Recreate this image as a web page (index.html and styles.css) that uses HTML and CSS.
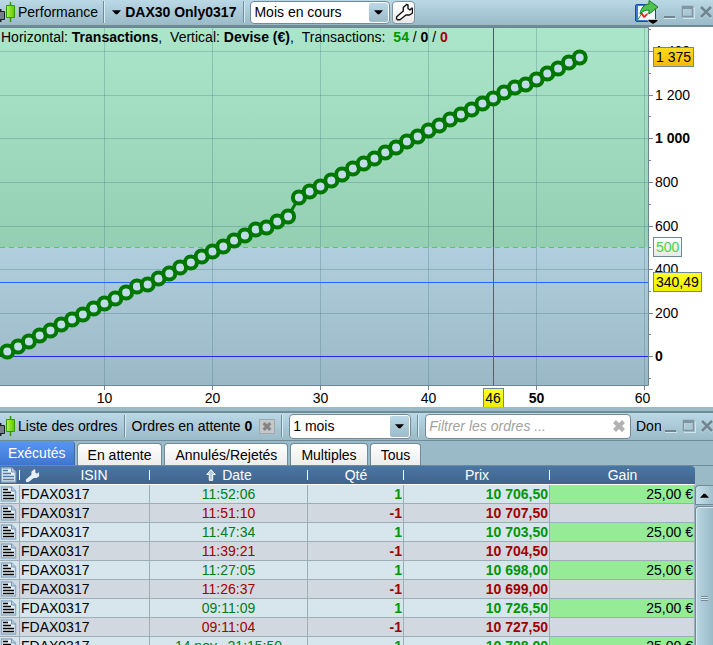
FILE: index.html
```html
<!DOCTYPE html>
<html lang="fr">
<head>
<meta charset="utf-8">
<title>Performance</title>
<link rel="stylesheet" href="styles.css">
</head>
<body>
<svg class="defs" aria-hidden="true">
  <defs>
    <linearGradient id="candle" x2="1"><stop stop-color="#b4f23c"/><stop offset="1" stop-color="#58c80a"/></linearGradient>
    <symbol id="candles" viewBox="0 0 16 21">
      <path d="M.5 7v13" stroke="#222" stroke-width="2"/><path d="M-3 9.500H4.500V17.500H-3z" fill="#71808c" stroke="#1d2328"/>
      <path d="M10.500 0v20" stroke="#2e9a06" stroke-width="1.500"/><path d="M6.500 3.500h8v12h-8z" fill="url(#candle)" stroke="#2e9a06"/>
    </symbol>
    <symbol id="min" viewBox="0 0 14 16"><path d="M1 13h11v2H1z" fill="#71848f"/><path d="M1 15h12v1H1z" fill="#d4e4ec"/></symbol>
    <symbol id="max" viewBox="0 0 14 16"><path d="M2.500 5.500h11v10h-11z" fill="none" stroke="#d4e4ec"/><path d="M1.500 3.500h10v10h-10z" fill="none" stroke="#84949e" stroke-width="1.500"/><path d="M1 3h11v3H1z" fill="#84949e"/></symbol>
    <symbol id="close" viewBox="0 0 14 16"><path d="M2 5l10 10M12 5L2 15" stroke="#d4e4ec" stroke-width="2"/><path d="M2 4l10 10M12 4L2 14" stroke="#71848f" stroke-width="2.600"/></symbol>
    <symbol id="caret" viewBox="0 0 10 5"><path d="M0 0h10L6 4.500H4z" fill="#000"/></symbol>
    <symbol id="wrench" viewBox="0 0 18 18"><path d="M1.700 13.700L8.300 8V4.500L11.600 1.500 13 2v3.500l2 1.500 2-2 .5 1v4L14.500 12H11L5 16.800H2.500l-1-1z" stroke-linejoin="round"/></symbol>
    <symbol id="cross" viewBox="0 0 12 12"><path d="M3 0l3 3 3-3 3 3-3 3 3 3-3 3-3-3-3 3-3-3 3-3-3-3z"/></symbol>
    <symbol id="doc" viewBox="0 0 17 16">
      <path d="M1.500 1h10l4 4v10h-14z" fill="#e5eff6" stroke="#8eacc5" stroke-width="1.500"/><path d="M11.500 1v4h4" fill="#b5cfe2" stroke="#7899b7"/>
      <path class="doc-lines" d="M3 3.500h5M3 6.500h8M3 9.500h11M3 12.500h11" fill="none" stroke-width="1.400"/>
    </symbol>
  </defs>
</svg>

<main class="app">
  <header class="bar bar-top">
    <svg class="candles"><use href="#candles"/></svg>
    <span class="name">Performance</span>
    <i class="sep"></i>
    <button class="instrument" type="button"><svg class="caret"><use href="#caret"/></svg>DAX30 Only0317</button>
    <i class="sep"></i>
    <div class="pick pick-wide">
      <select aria-label="Période"><option>Mois en cours</option></select>
      <span class="drop"><svg class="caret"><use href="#caret"/></svg></span>
    </div>
    <button class="tool" type="button" aria-label="Réglages"><svg class="wrench"><use href="#wrench"/></svg></button>
    <div class="window">
      <button class="export" type="button" aria-label="Exporter">
        <svg viewBox="0 0 24 24"><rect x=".5" y="4.500" width="20" height="17" rx="1.500" fill="#3b78cf" stroke="#164da4"/><path d="M3 6h17v14H3z" fill="#f5faff"/><path d="M2 21L7 13l3 4 5-6" fill="none" stroke="#1ca52a"/><path d="M6 13l3 4 3-3" fill="none" stroke="#ec2525" stroke-width="1.500"/><path d="M5 14C6 8 9 4.500 14 4V.5L23 7l-9 7v-4c-4 0-6 1-9 4z" fill="#4fc250" stroke="#178021"/><path d="M13 19.500h10v1.500l-4 3h-2l-4-3z" fill="#000" stroke="#fff" stroke-width=".6"/></svg>
      </button>
      <button type="button" aria-label="Réduire"><svg><use href="#min"/></svg></button>
      <button type="button" aria-label="Agrandir"><svg><use href="#max"/></svg></button>
      <button type="button" aria-label="Fermer"><svg><use href="#close"/></svg></button>
    </div>
  </header>

  <section class="chart">
    <p class="legend"><span>Horizontal: <b>Transactions</b>,</span><span>Vertical: <b>Devise (€)</b>,</span><span>Transactions:</span><span><b class="win">54</b> / <b>0</b> / <b class="loss">0</b></span></p>
    <svg class="plot" id="plot" viewBox="0 0 713 380" role="img" aria-label="Performance">
      <defs>
        <linearGradient id="green" x2="0" y2="1"><stop stop-color="#abe6ca"/><stop offset="1" stop-color="#94ceb3"/></linearGradient>
        <linearGradient id="blue" x2="0" y2="1"><stop stop-color="#b0cedd"/><stop offset="1" stop-color="#9ab8c5"/></linearGradient>
        <linearGradient id="gold" x2="0" y2="1"><stop stop-color="#ffdc20"/><stop offset="1" stop-color="#f5b905"/></linearGradient>
        <linearGradient id="yellow" x2="0" y2="1"><stop stop-color="#ffff28"/><stop offset="1" stop-color="#eeee00"/></linearGradient>
        <linearGradient id="grey" x2="0" y2="1"><stop stop-color="#fff"/><stop offset="1" stop-color="#e8e8e8"/></linearGradient>
      </defs>
      <rect width="648" height="220" fill="url(#green)"/>
      <rect y="220" width="648" height="138" fill="url(#blue)"/>
      <g id="grid" class="grid"></g>
      <path d="M0 220.500H648" stroke="#52cc52" stroke-dasharray="5 4"/>
      <path d="M0 329.500H648" stroke="#2828d8"/>
      <path d="M0 255.500H648" stroke="#2864ff"/>
      <path d="M493.500 0V220" stroke="#455e5d"/><path d="M493.500 220V358" stroke="#2f5fd8"/>
      <path d="M0 358.500H648.500V.5H0" fill="none" stroke="#6c8793"/>
      <g id="curve" class="curve"></g>
      <g id="ticks" class="ticks"></g>
      <rect x="653.500" y="20.500" width="40" height="19" fill="url(#gold)" stroke="#708894"/><text x="656" y="35">1 375</text>
      <rect x="653.500" y="210.500" width="28" height="19" fill="url(#grey)" stroke="#708894"/><text x="656" y="225" class="level">500</text>
      <rect x="653.500" y="245.500" width="48" height="19" fill="url(#yellow)" stroke="#708894"/><text x="656" y="260">340,49</text>
      <rect x="483.500" y="361.500" width="20" height="19" fill="url(#yellow)" stroke="#708894"/><text x="493" y="376" class="mid">46</text>
    </svg>
  </section>

  <section class="orders">
    <header class="bar">
      <svg class="candles"><use href="#candles"/></svg>
      <span class="name">Liste des ordres</span>
      <i class="sep"></i>
      <span class="pending">Ordres en attente <b>0</b></span>
      <button class="cancel" type="button" aria-label="Annuler les ordres"><svg><use href="#cross"/></svg></button>
      <i class="sep"></i>
      <div class="pick">
        <select aria-label="Durée"><option>1 mois</option></select>
        <span class="drop"><svg class="caret"><use href="#caret"/></svg></span>
      </div>
      <i class="sep"></i>
      <div class="filter">
        <input type="text" aria-label="Filtrer les ordres" placeholder="Filtrer les ordres ...">
        <button type="button" aria-label="Effacer"><svg><use href="#cross"/></svg></button>
      </div>
      <span class="clip">Données</span>
      <div class="window">
        <button type="button" aria-label="Réduire"><svg><use href="#min"/></svg></button>
        <button type="button" aria-label="Agrandir"><svg><use href="#max"/></svg></button>
        <button type="button" aria-label="Fermer"><svg><use href="#close"/></svg></button>
      </div>
    </header>
    <nav class="tabs">
      <button class="on" type="button">Exécutés</button><button type="button">En attente</button><button type="button">Annulés/Rejetés</button><button type="button">Multiples</button><button type="button">Tous</button>
    </nav>
    <div class="list">
      <table>
        <colgroup><col class="c-doc"><col class="c-isin"><col class="c-date"><col class="c-qty"><col class="c-price"><col></colgroup>
        <thead><tr>
          <th><svg class="doc doc-head"><use href="#doc"/></svg></th>
          <th><div class="isin"><svg class="wrench"><use href="#wrench"/></svg><span>ISIN</span></div></th>
          <th><svg class="up" viewBox="0 0 10 12"><path d="M5 .7L9.300 5.500H6.700V11.300H3.300V5.500H.7z" fill="#b8cce0" stroke="#fff"/></svg>Date</th>
          <th>Qté</th><th>Prix</th><th>Gain</th>
        </tr></thead>
        <tbody id="rows"></tbody>
      </table>
      <div class="scroll"><button type="button" aria-label="Monter"><svg viewBox="0 0 10 5"><path d="M0 5h10L6 .5H4z"/></svg></button><div class="thumb"><i></i></div></div>
    </div>
  </section>
</main>
<script src="app.js"></script>
</body>
</html>
```
FILE: styles.css
```css
* { box-sizing: border-box; }
body { margin: 0; background: #9bbac8; color: #000; font: 14px/18px "Liberation Sans", Arial, sans-serif; }
button, select, input { font: inherit; color: inherit; margin: 0; padding: 0; border: 0; background: none; }
b { font-weight: bold; }
svg { display: block; flex: none; }
.defs { position: absolute; width: 0; height: 0; }
.app { display: flex; flex-direction: column; height: 100vh; overflow: hidden; }

.bar { display: flex; align-items: center; height: 28px; flex: none; background: linear-gradient(#bad8e5, #9bbac8); border-top: 1px solid #d4e8f0; border-bottom: 1px solid #708b98; box-shadow: inset 0 -1px #9bbac8; white-space: nowrap; }
.bar-top { height: 27px; padding-bottom: 1px; border-top: 0; border-bottom-width: 2px; }
.candles { width: 16px; height: 21px; margin-right: 2px; }
.sep { width: 2px; height: 22px; flex: none; margin: 0 5px; background: linear-gradient(90deg, #718b98 50%, #d9edf5 50%); }
.orders .sep { margin: 0 6px; }
.instrument { display: flex; align-items: center; gap: 4px; padding: 0 2px; font-weight: bold; }
.caret { width: 9px; height: 5px; }
.pick { position: relative; width: 122px; height: 25px; flex: none; }
.pick-wide { width: 140px; height: 23px; }
.pick select { appearance: none; width: 100%; height: 100%; padding: 0 3px; background: #fff; border: 1px solid #738b98; border-radius: 4px; }
.drop { position: absolute; top: 2px; right: 2px; bottom: 2px; width: 19px; display: grid; place-items: center; background: linear-gradient(#bad8e5, #9cbbc9); border-radius: 2px; pointer-events: none; }
.tool { width: 23px; height: 23px; flex: none; margin-left: 2px; display: grid; place-items: center; background: linear-gradient(#fff, #e8e8e8); border: 1px solid #8095a0; border-radius: 4px; }
.wrench { width: 18px; height: 18px; fill: #fff; stroke: #111; stroke-width: 1.4; }
.window { display: flex; align-items: center; gap: 4px; margin-left: auto; }
.window svg { width: 14px; height: 16px; margin-bottom: 2px; }
.window .export svg { width: 24px; height: 24px; margin: 0; }

.chart { position: relative; flex: none; background: #fff; }
.legend { position: absolute; top: 1px; left: 1px; display: flex; gap: 8px; margin: 0; white-space: nowrap; }
.win { color: #009600; }
.loss { color: #a00000; }
.plot { width: 100%; height: auto; }
.plot text { font-size: 14px; }
.plot .mid { text-anchor: middle; }
.plot .level { fill: #46d246; }
.plot .strong { font-weight: bold; }
.grid { stroke: #34616b; stroke-opacity: .25; }
.ticks path { stroke: #708894; }
.curve polyline { fill: none; stroke: #007800; stroke-width: 3; }
.curve circle { fill: #c0dce9; stroke: #007800; stroke-width: 4; }

.orders { display: flex; flex-direction: column; flex: 1; min-height: 0; margin-top: 1px; padding-top: 3px; }
.orders > .bar { height: 30px; padding-bottom: 1px; border-top: 2px solid #708b98; }
.pending { margin-right: 7px; }
.cancel { width: 16px; height: 15px; padding: 2px; background: #c3c9cb; border: 1px solid #a2a8aa; }
.cancel svg { width: 10px; height: 9px; fill: #858585; }
.filter { position: relative; flex: 1; height: 25px; min-width: 60px; }
.filter input { width: 100%; height: 100%; padding: 0 24px 0 3px; background: #fff; border: 1px solid #738b98; border-radius: 4px; }
.filter input::placeholder { color: #a2a2a2; font-style: italic; opacity: 1; }
.filter button { position: absolute; top: 6px; right: 6px; }
.filter svg { width: 12px; height: 12px; fill: #b2b2b2; }
.clip { width: 25px; margin: 0 3px 0 5px; flex: none; overflow: hidden; }
.orders .bar .window { margin-left: 0; margin-right: -1px; }

.tabs { display: flex; gap: 2px; height: 25px; flex: none; align-items: flex-end; border-bottom: 1px solid #708b98; }
.tabs button { height: 22px; padding: 0 10px; background: linear-gradient(#fff, #ececec); border: 1px solid #708b98; border-bottom: 0; border-radius: 4px 4px 0 0; white-space: nowrap; }
.tabs .on { height: 24px; padding: 0 8px; color: #fff; background: linear-gradient(#5a96ee, #3d76d2); border: 0; border-right: 1px solid #3d6ca8; border-radius: 0 4px 0 0; }

.list { display: flex; flex: 1; min-height: 0; overflow: hidden; align-items: stretch; }
table { flex: 1; align-self: flex-start; table-layout: fixed; border-collapse: separate; border-spacing: 0; width: 0; }
.c-doc { width: 20px; }
.c-isin { width: 130px; }
.c-date { width: 158px; }
.c-qty { width: 96px; }
.c-price { width: 146px; }
th { height: 19px; padding: 0; font-weight: normal; line-height: 18px; color: #fff; background: linear-gradient(90deg, transparent calc(100% - 1px), #fff 0) 0 4px / 100% 10px no-repeat, linear-gradient(#4a76a5, #40648c); border-bottom: 1px solid #fff; }
th:last-child { background: linear-gradient(#4a76a5, #40648c); border-top-right-radius: 4px; }
.isin { display: flex; align-items: center; height: 18px; padding-left: 4px; }
.isin span { flex: 1; text-align: center; padding-right: 2px; }
.isin .wrench { width: 16px; height: 15px; fill: #e5edf5; stroke: #e5edf5; stroke-width: 0; }
.up { display: inline-block; width: 10px; height: 12px; margin-right: 6px; vertical-align: -1px; }
td { height: 19px; padding: 0 1px; line-height: 18px; border-right: 1px solid #9caeb6; border-bottom: 1px solid #9caeb6; white-space: nowrap; background: #d1d8df; }
.buy td { background: #d7e6ed; }
.buy td.gain { background: #96ec96; }
td:first-child { padding: 0; }
td.date { text-align: center; color: #a00000; }
td.num { text-align: right; font-weight: bold; color: #a00000; }
.buy td.date { color: #007d14; }
.buy td.num { color: #009600; }
td.gain { text-align: right; }
.doc { width: 17px; height: 16px; stroke: #000; }
.doc-head { stroke: #4e78a5; }
.scroll { width: 18px; flex: none; padding-top: 19px; display: flex; flex-direction: column; }
.scroll button { height: 20px; flex: none; display: grid; place-items: center; background: linear-gradient(90deg, #c3dfea, #a1c0cd); border: 1px solid #738b98; border-right: 0; border-radius: 4px 0 0 0; }
.scroll svg { width: 9px; height: 5px; }
.thumb { flex: 1; display: grid; place-items: center; margin-top: 1px; background: linear-gradient(90deg, #b9d6e1, #9bbac8); border: 1px solid #738b98; border-width: 1px 0 0 1px; box-shadow: inset 1px 1px #d8eaf1; border-radius: 4px 0 0 0; }
.thumb i { width: 7px; height: 5px; margin-top: 44px; background: repeating-linear-gradient(#738b98 0 1px, #d8eaf1 1px 2px); }
```
FILE: app.js
```js
const xOf = n => 10.8 * n - 3.5;

// Height of the equity curve after each transaction.
const curve = [324, 319, 314, 308, 303, 297, 292, 287, 281, 276, 271, 265, 259, 257, 251, 246, 240, 235, 229, 224, 219, 213, 208, 202, 200, 194, 189, 170, 164, 159, 153, 147, 141, 136, 131, 125, 120, 114, 109, 103, 98, 92, 87, 82, 76, 71, 65, 60, 57, 52, 46, 41, 35, 30];
document.getElementById("curve").innerHTML =
  `<polyline points="-4,330 ${curve.map((y, i) => `${xOf(i + 1)},${y + 0.5}`).join(" ")}"/>` +
  curve.map((y, i) => `<circle cx="${xOf(i + 1)}" cy="${y + 0.5}" r="6"/>`).join("");

let grid = "";
let ticks = "";
for (let n = 10; n <= 60; n += 10) {
  const x = Math.round(xOf(n)) - 0.5;
  grid += `<path d="M${x} 1V358"/>`;
  ticks += `<path d="M${x} 359v4"/><text class="mid${n === 50 ? " strong" : ""}" x="${n === 60 ? x - 2 : x}" y="376">${n}</text>`;
}
[1400, 1200, 1000, 800, 600, 400, 200, 0].forEach((v, i) => {
  const y = Math.round(24.2 + i * 43.6) + 0.5;
  const label = v >= 1000 ? "1 " + String(v).slice(1) : v;
  grid += `<path d="M0 ${y}H648"/>`;
  ticks += `<path d="M649 ${y}h4M649 ${y - 22}h2"/><text class="${v % 1000 ? "" : "strong"}" x="655" y="${y + 4.5}">${label}</text>`;
});
ticks += '<path d="M649 351.5h2"/>';
document.getElementById("grid").innerHTML = grid;
document.getElementById("ticks").innerHTML = ticks;

const orders = [
  ["11:52:06", 1, "10 706,50"],
  ["11:51:10", -1, "10 707,50"],
  ["11:47:34", 1, "10 703,50"],
  ["11:39:21", -1, "10 704,50"],
  ["11:27:05", 1, "10 698,00"],
  ["11:26:37", -1, "10 699,00"],
  ["09:11:09", 1, "10 726,50"],
  ["09:11:04", -1, "10 727,50"],
  ["14 nov., 21:15:50", 1, "10 708,00"]
];
document.getElementById("rows").innerHTML = orders.map(([date, qty, price]) =>
  `<tr class="${qty > 0 ? "buy" : "sell"}"><td><svg class="doc"><use href="#doc"/></svg></td><td>FDAX0317</td><td class="date">${date}</td><td class="num">${qty}</td><td class="num">${price}</td><td class="gain">${qty > 0 ? "25,00 €" : ""}</td></tr>`
).join("");
```
